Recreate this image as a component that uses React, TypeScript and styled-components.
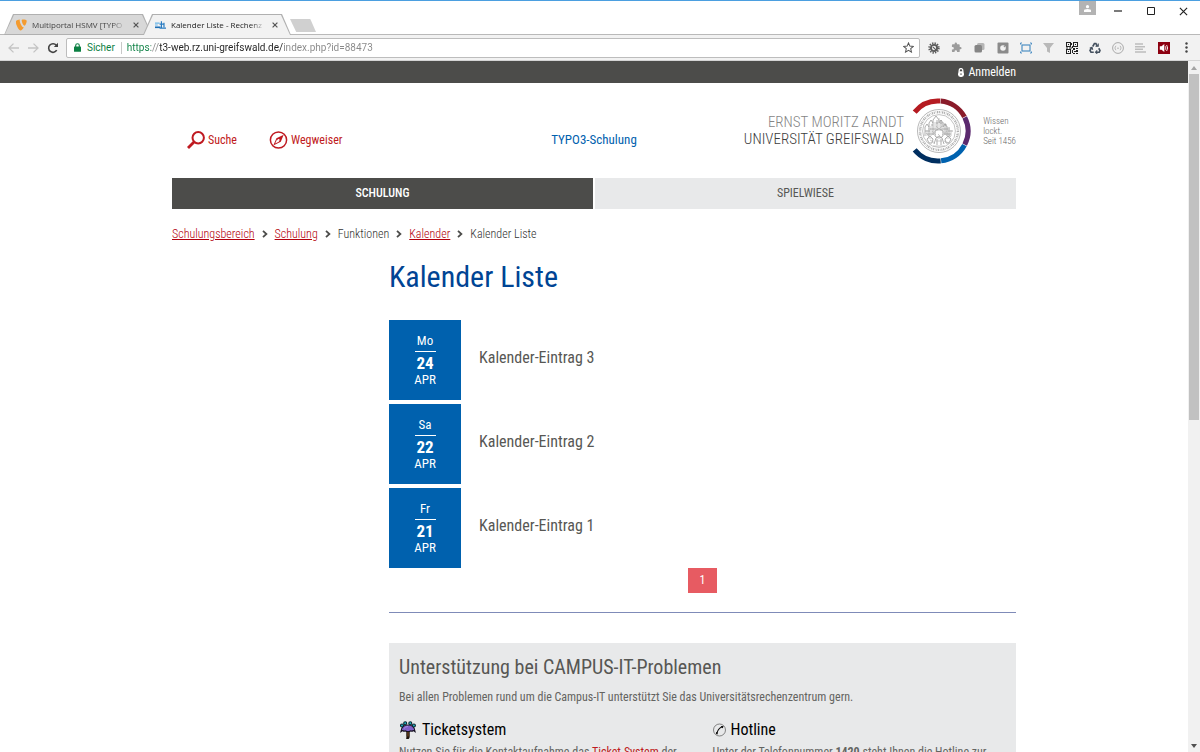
import React from 'react';
import styled, { createGlobalStyle } from 'styled-components';

const condensed = '"Roboto Condensed", Roboto, "Liberation Sans", sans-serif';
const ui = 'Roboto, "Open Sans", "Liberation Sans", sans-serif';

const color = {
  dark: '#4c4c4a',
  text: '#575754',
  muted: '#646461',
  red: '#bf1a21',
  blue: '#0061ae',
  title: '#004494',
  panel: '#e8e9ea',
};

const GlobalStyle = createGlobalStyle`
  *, *::before, *::after { box-sizing: border-box; }
  body { margin: 0; overflow: hidden; background: #fff; }
  h1, h2, h3, p, ul, ol { margin: 0; padding: 0; font-weight: 400; }
  ul, ol { list-style: none; }
  button, input { font: inherit; color: inherit; margin: 0; padding: 0; border: 0; background: none; }
  svg { display: block; flex: none; }
`;

/* ---------- browser window ---------- */

const Window = styled.div`
  display: flex;
  flex-direction: column;
  height: 100vh;
  border-top: 1px solid #4b9fe0;
  font-family: ${ui};
`;

const TitleBar = styled.header`
  display: flex;
  justify-content: space-between;
  align-items: flex-start;
  height: 33px;
  background: #fff;
`;

const TabStrip = styled.div`
  display: flex;
  align-items: flex-end;
  height: 34px;
  padding-left: 4px;
`;

const TAB_SHAPE = 'polygon(9px 0, calc(100% - 9px) 0, 100% 100%, 0 100%)';

const Tab = styled.div<{ $active?: boolean }>`
  position: relative;
  z-index: ${p => (p.$active ? 2 : 1)};
  display: flex;
  align-items: center;
  width: 148px;
  height: 21px;
  padding: 0 10px 0 12px;
  font-family: "Open Sans", ${ui};
  font-size: 8px;
  line-height: 20px;
  color: ${p => (p.$active ? '#222' : '#444')};

  & + & { margin-left: -9px; }

  &::before, &::after {
    content: '';
    position: absolute;
    z-index: -1;
    inset: 0;
    clip-path: ${TAB_SHAPE};
    background: #b0b0b0;
  }
  &::after {
    inset: 1px 1px ${p => (p.$active ? '0' : '1px')};
    background: ${p => (p.$active ? '#f2f2f2' : '#d8d8d8')};
  }
`;

const TabTitle = styled.span`
  flex: 1;
  margin: 0 4px 0 5px;
  overflow: hidden;
  white-space: nowrap;
  mask-image: linear-gradient(to right, #000 85%, transparent);
`;

const TabClose = styled.button`
  display: grid;
  place-items: center;
  width: 12px;
  height: 12px;
  color: #555;
`;

const NewTab = styled.button`
  width: 26px;
  height: 13px;
  margin: 0 0 3px -1px;
  clip-path: polygon(0 0, 78% 0, 100% 100%, 24% 100%);
  background: #d0d0d0;
`;

const WindowButtons = styled.div`
  display: flex;
  align-items: flex-start;
`;

const ProfileButton = styled.button`
  display: grid;
  place-items: center;
  width: 17px;
  height: 14px;
  margin-right: 5px;
  background: #b3b3b3;
  color: #fff;
`;

const WindowButton = styled.button`
  display: grid;
  place-items: center;
  width: 33px;
  height: 20px;
  color: #222;
`;

const Toolbar = styled.div`
  display: flex;
  align-items: center;
  height: 27px;
  padding: 0 2px 0 3px;
  border-top: 1px solid #b9b9b9;
  border-bottom: 1px solid #d4d4d4;
  background: #f2f2f2;
`;

const ToolButton = styled.button<{ $muted?: boolean }>`
  display: grid;
  place-items: center;
  width: 20px;
  height: 20px;
  color: ${p => (p.$muted ? '#c4c4c4' : '#444')};
`;

const AddressBar = styled.div`
  display: flex;
  flex: 1;
  align-items: center;
  height: 20px;
  margin: 0 2px 0 3px;
  padding: 0 5px 0 7px;
  border: 1px solid #bdbdbd;
  border-radius: 2px;
  background: #fff;
  font-size: 10px;
  color: #0b8043;
`;

const Secure = styled.label`
  margin-left: 6px;
  padding-right: 6px;
  border-right: 1px solid #c8c8c8;
  line-height: 12px;
`;

const AddressInput = styled.input`
  flex: 1;
  margin-left: 5px;
  height: 18px;
  outline: 0;
  color: #333;
  background: linear-gradient(to right, #0b8043 24px, #888 24px, #888 32px, #222 32px, #222 156px, #888 156px);
  background-clip: text;
  -webkit-text-fill-color: transparent;
`;

const Star = styled.button`
  display: grid;
  place-items: center;
  color: #555;
`;

const Extensions = styled.div`
  display: grid;
  grid-auto-flow: column;
  grid-auto-columns: 23px;
`;

const ExtensionButton = styled.button`
  display: grid;
  place-items: center;
  height: 20px;
`;

const Viewport = styled.div`
  display: flex;
  flex: 1;
  min-height: 0;
`;

const Page = styled.div`
  flex: 1;
  overflow: hidden;
  background: #fff;
  font-family: ${condensed};
  font-size: 12px;
  line-height: 16px;
  color: ${color.text};
`;

const Scrollbar = styled.div`
  display: flex;
  flex-direction: column;
  width: 12px;
  background: #f1f1f1;
`;

const ScrollArrow = styled.button<{ $down?: boolean }>`
  display: grid;
  place-items: center;
  height: 13px;
  color: ${p => (p.$down ? '#505050' : '#a3a3a3')};
`;

const ScrollTrack = styled.div`
  flex: 1;
  padding: 0 1px;
`;

const ScrollThumb = styled.div`
  height: 52%;
  background: #c1c1c1;
`;

/* ---------- page ---------- */

const Container = styled.div`
  max-width: 844px;
  margin: 0 auto;
`;

const TopBar = styled.div`
  background: ${color.dark};
`;

const TopBarInner = styled(Container)`
  display: flex;
  justify-content: flex-end;
  height: 22px;
`;

const LoginLink = styled.a`
  display: flex;
  align-items: center;
  gap: 4px;
  color: #fff;
  text-decoration: none;
`;

const Masthead = styled(Container)`
  display: grid;
  grid-template-columns: 1fr auto 1fr;
  align-items: center;
  height: 95px;
`;

const QuickLinks = styled.div`
  display: flex;
  gap: 32px;
  padding: 19px 0 0 15px;
`;

const QuickLink = styled.a`
  display: flex;
  align-items: center;
  gap: 3px;
  color: ${color.red};
  text-decoration: none;
`;

const SiteName = styled.a`
  padding-top: 19px;
  font-size: 13px;
  color: ${color.blue};
  text-decoration: none;
`;

const Logo = styled.a`
  display: flex;
  justify-content: flex-end;
  align-items: center;
  color: #3c3c3c;
  text-decoration: none;
`;

const LogoName = styled.span`
  display: grid;
  margin-right: 6px;
  font-size: 15px;
  line-height: 17px;
  font-weight: 300;
  text-align: right;
  white-space: nowrap;
`;

const LogoPerson = styled.span`
  color: #858585;
`;

const Claim = styled.span`
  display: grid;
  margin-left: 11px;
  font-size: 9px;
  line-height: 10px;
  font-weight: 300;
  color: #666;
  white-space: nowrap;
`;

const MainNav = styled.nav`
  display: grid;
  grid-template-columns: 1fr 1fr;
  gap: 2px;
`;

const NavLink = styled.a<{ $active?: boolean }>`
  line-height: 31px;
  text-align: center;
  text-transform: uppercase;
  text-decoration: none;
  font-weight: ${p => (p.$active ? 500 : 400)};
  color: ${p => (p.$active ? '#fff' : color.text)};
  background: ${p => (p.$active ? color.dark : color.panel)};
`;

const Breadcrumbs = styled.ol`
  display: flex;
  padding-top: 17px;
  font-weight: 300;
  color: #333;
`;

const Crumb = styled.li`
  display: flex;
  align-items: center;

  a { color: #b3000c; }
  svg { margin: 0 7px; }
`;

const Content = styled.main`
  margin-left: 217px;
`;

const PageTitle = styled.h1`
  padding: 17px 0 25px;
  font-size: 30px;
  line-height: 36px;
  color: ${color.title};
`;

const EventList = styled.ul`
  display: grid;
  gap: 4px;
`;

const EventItem = styled.li`
  display: flex;
  gap: 18px;
`;

const DateBox = styled.time`
  display: flex;
  flex-direction: column;
  align-items: center;
  width: 72px;
  height: 80px;
  padding-top: 13px;
  background: ${color.blue};
  color: #fff;
  font-size: 13px;
`;

const Weekday = styled.span`
  width: 21px;
  padding-bottom: 2px;
  border-bottom: 1px solid #fff;
  text-align: center;
`;

const Day = styled.strong`
  padding-top: 3px;
  font-size: 17px;
  line-height: 17px;
`;

const Month = styled.span`
  line-height: 15px;
  text-transform: uppercase;
`;

const EventLink = styled.a`
  padding-top: 28px;
  font-size: 16px;
  line-height: 20px;
  color: ${color.text};
  text-decoration: none;
`;

const Pagination = styled.nav`
  display: flex;
  justify-content: center;
  padding-bottom: 19px;
  border-bottom: 1px solid #7f8bb8;
`;

const PageLink = styled.a`
  width: 29px;
  line-height: 25px;
  text-align: center;
  text-decoration: none;
  color: #fff;
  background: #e75b62;
`;

const SupportPanel = styled.section`
  margin-top: 30px;
  padding: 11px 10px 30px;
  background: ${color.panel};
  color: ${color.muted};
`;

const PanelTitle = styled.h2`
  font-size: 20px;
  line-height: 26px;
  color: ${color.text};
`;

const PanelIntro = styled.p`
  padding: 9px 0 14px;
`;

const PanelColumns = styled.div`
  display: grid;
  grid-template-columns: 1fr 1fr;
  gap: 20px;
`;

const ColumnTitle = styled.h3`
  display: flex;
  align-items: center;
  gap: 5px;
  padding-bottom: 3px;
  font-size: 16px;
  line-height: 22px;
  color: #000;
`;

const TextLink = styled.a`
  color: ${color.red};
  text-decoration: none;
`;

/* ---------- drawings ---------- */

const Cross = ({ size }: { size: number }) => (
  <svg width={size} height={size} viewBox="0 0 10 10" stroke="currentColor" strokeWidth={size > 8 ? 1.3 : 2}>
    <path d="M1 1l8 8M9 1l-8 8" />
  </svg>
);

const Typo3Icon = () => (
  <svg width="11" height="12" viewBox="0 0 11 12" fill="#f49b2f">
    <path d="M7.800 8.200c-.2.1-.3.1-.5.1C5.800 8.300 3.700 3.200 3.700 1.500c0-.6.2-.8.4-1C2.300.7.500 1.300 0 2c-.1.200-.2.500-.2.800 0 2.700 2.800 8.700 4.800 8.700.9 0 2.400-1.500 3.200-3.300" />
    <path d="M6.900.4c1.900 0 3.800.3 3.800 1.400 0 2.200-1.400 4.900-2.100 4.900-1.300 0-2.900-3.600-2.900-5.400 0-.8.300-.9 1.200-.9" />
  </svg>
);

const CampusIcon = () => (
  <svg width="11" height="10" viewBox="0 0 12 10" fill="none">
    <path d="M0 3h5M0 5h3" stroke="#6bb5e8" strokeWidth="1.200" />
    <path d="M0 7.500h6" stroke="#1d6fb5" strokeWidth="1.800" />
    <path d="M7 1v8M5 4h5M5 8.500h7M9.800 2.500v5" stroke="#2a7cc2" strokeWidth="1.300" />
  </svg>
);

const PersonIcon = () => (
  <svg width="7" height="7" viewBox="0 0 7 7" fill="currentColor">
    <circle cx="3.500" cy="1.700" r="1.600" />
    <path d="M0 7V5.500Q0 4 3.500 4T7 5.500V7z" />
  </svg>
);

const BackIcon = ({ flip }: { flip?: boolean }) => (
  <svg width="11" height="10" viewBox="0 0 11 10" fill="none" stroke="currentColor" strokeWidth="1.300">
    <path d={flip ? 'M0 5h10M5.500.600L10 5 5.500 9.400' : 'M11 5H1M5.500.600L1 5l4.500 4.400'} />
  </svg>
);

const ReloadIcon = () => (
  <svg width="12" height="12" viewBox="0 0 12 12" fill="none" stroke="currentColor" strokeWidth="1.600">
    <path d="M9.700 8.200A4.300 4.300 0 1 1 9.300 3.300" />
    <path d="M11 .800V5H6.800z" fill="currentColor" stroke="none" />
  </svg>
);

const PadlockIcon = () => (
  <svg width="7" height="9" viewBox="0 0 7 9">
    <path d="M1.700 4V2.600a1.800 1.800 0 0 1 3.600 0V4" fill="none" stroke="currentColor" strokeWidth="1.100" />
    <rect y="3.600" width="7" height="5.200" rx=".6" fill="currentColor" />
  </svg>
);

const StarIcon = () => (
  <svg width="11" height="11" viewBox="0 0 24 24" fill="none" stroke="currentColor" strokeWidth="2.200">
    <path d="M12 2l3 7 7.500.600-5.700 5 1.700 7.400-6.500-4-6.500 4 1.700-7.400-5.700-5L9 9z" />
  </svg>
);

const GearIcon = () => (
  <svg width="12" height="12" viewBox="0 0 12 12" fill="none">
    <circle cx="6" cy="6" r="4.800" stroke="#5a5a5a" strokeWidth="1.800" strokeDasharray="1.350 1.160" />
    <circle cx="6" cy="6" r="3.100" stroke="#5a5a5a" strokeWidth="1.900" />
    <path d="M4.800 4.800l3.400 3.400" stroke="#5a5a5a" strokeWidth="1.100" />
  </svg>
);

const PuzzleIcon = () => (
  <svg width="11" height="11" viewBox="0 0 24 24" fill="#9c9c9c">
    <path d="M20.500 11H19V7a2 2 0 0 0-2-2h-4V3.500a2.500 2.500 0 0 0-5 0V5H4a2 2 0 0 0-2 2v3.800h1.500a2.700 2.700 0 0 1 0 5.400H2V20a2 2 0 0 0 2 2h3.800v-1.500a2.700 2.700 0 0 1 5.400 0V22H17a2 2 0 0 0 2-2v-4h1.500a2.500 2.500 0 0 0 0-5z" />
  </svg>
);

const StackIcon = () => (
  <svg width="11" height="11" viewBox="0 0 11 11">
    <rect x="3" y="1" width="7.500" height="7" rx="1.500" fill="#b5b5b5" />
    <rect x=".5" y="3" width="7.500" height="7.500" rx="1.500" fill="#858585" />
  </svg>
);

const SquareIcon = () => (
  <svg width="12" height="12" viewBox="0 0 12 12">
    <rect x=".5" y=".5" width="11" height="11" rx="1" fill="#8b8b8b" />
    <circle cx="6" cy="6" r="2.800" fill="#f2f2f2" />
    <path d="M6.500 4.500L8.500 3 7.500 5.500z" fill="#8b8b8b" />
  </svg>
);

const CaptureIcon = () => (
  <svg width="12" height="12" viewBox="0 0 12 12" fill="none" stroke="#4d8fc4">
    <rect x="2" y="3" width="8" height="6" strokeWidth="1.200" />
    <path d="M.5 2.500V1H2M10 1h1.500v1.500M.5 9.500V11H2M10 11h1.500V9.500" />
  </svg>
);

const FunnelIcon = () => (
  <svg width="11" height="10" viewBox="0 0 11 10" fill="#b9b9b9">
    <path d="M0 0h11L7 5v5L4 8.500V5z" />
  </svg>
);

const QrIcon = () => (
  <svg width="12" height="12" viewBox="0 0 12 12" fill="#222">
    <path fillRule="evenodd" d="M0 0h5v5H0zM1 1v3h3V1zM7 0h5v5H7zM8 1v3h3V1zM0 7h5v5H0zM1 8v3h3V8z" />
    <path d="M2 2h1v1H2zM9 2h1v1H9zM2 9h1v1H2zM5 1h1v2H5zM6 4h1v2H6zM0 5.500h2v1H0zM3 5.500h3v1H3zM7 6h2v2H7zM10 6h2v1h-2zM6 8h1v3H6zM8 9h2v1H8zM10 8h2v2h-2zM7 11h2v1H7zM10 11h2v1h-2z" />
  </svg>
);

const RecycleIcon = () => (
  <svg width="12" height="12" viewBox="0 0 24 24" fill="none" stroke="#44505e" strokeWidth="3.200">
    <path d="M7.500 9l3.300-6h3l3 5.500M19.500 12.500L22 17l-1.500 3.500H14M9.500 20.500H4L2 17l3-5.500" />
    <path d="M13 8.500h5.500V3M16.500 17L13 20.500l3.500 3M1.500 12.500L6 10.500l1.500 5" strokeWidth="2.200" />
  </svg>
);

const BracesIcon = () => (
  <svg width="12" height="12" viewBox="0 0 12 12" fill="none" stroke="#aaa">
    <circle cx="6" cy="6" r="5.400" />
    <path d="M4.200 4Q3.200 4 3.400 5L2.800 6l.6 1Q3.200 8 4.200 8M7.800 4q1 0 .8 1l.6 1-.6 1q.2 1-.8 1" strokeWidth=".8" />
    <path d="M5 6.200h2" strokeWidth=".8" />
  </svg>
);

const LinesIcon = () => (
  <svg width="11" height="10" viewBox="0 0 11 10" stroke="#bdbdbd" strokeWidth="1.500">
    <path d="M0 1h8M0 3.700h10M0 6.300h8M0 9h11" />
  </svg>
);

const SpeakerIcon = () => (
  <svg width="12" height="12" viewBox="0 0 12 12">
    <rect width="12" height="12" fill="#8c0010" />
    <path d="M1.800 4.300h1.700L6.300 2v8L3.500 7.700H1.800z" fill="#fff" />
    <path d="M7.300 4.300q1.300 1.700 0 3.400M8.600 3q2.200 3 0 6" fill="none" stroke="#fff" strokeWidth=".9" />
  </svg>
);

const DotsIcon = () => (
  <svg width="3" height="11" viewBox="0 0 3 11" fill="#444">
    <circle cx="1.500" cy="1.500" r="1.200" />
    <circle cx="1.500" cy="5.500" r="1.200" />
    <circle cx="1.500" cy="9.500" r="1.200" />
  </svg>
);

const LoginIcon = () => (
  <svg width="6" height="9" viewBox="0 0 6 9">
    <path d="M1.200 4V2.400a1.800 1.800 0 0 1 3.600 0V4" fill="none" stroke="#fff" strokeWidth="1.300" />
    <rect y="3.200" width="6" height="5.800" rx="2.400" fill="#fff" />
    <path d="M3 5.300v1.700" stroke="#4c4c4a" />
  </svg>
);

const SearchIcon = () => (
  <svg width="18" height="18" viewBox="0 0 18 18" fill="none" stroke={color.red}>
    <circle cx="11.200" cy="6.800" r="5.700" strokeWidth="2" />
    <path d="M7 11L1 17" strokeWidth="2.800" />
  </svg>
);

const CompassIcon = () => (
  <svg width="19" height="18" viewBox="0 0 19 18">
    <circle cx="9.500" cy="9" r="8.100" fill="none" stroke={color.red} strokeWidth="1.500" />
    <path fillRule="evenodd" d="M14.700 3.700L11.800 10.800 4.300 14.500 7.400 7.300zM8 8.500l-1.800 4 4-1.900z" fill={color.red} />
    <circle cx="9.600" cy="9" r="1" fill="#fff" />
  </svg>
);

const ChevronIcon = () => (
  <svg width="6" height="8" viewBox="0 0 6 8" fill="none" stroke="#4c4c4a" strokeWidth="1.800">
    <path d="M1 .800L4.400 4 1 7.200" />
  </svg>
);

const segments: [number, number, string][] = [
  [-141, -86, '#b51b21'],
  [-85, -28, '#8a1b2a'],
  [-27, 27, '#5b2a6e'],
  [28, 84, '#0062af'],
  [85, 141, '#002f60'],
];

const polar = (deg: number, r: number) =>
  `${(28 + r * Math.cos((deg * Math.PI) / 180)).toFixed(2)} ${(34 + r * Math.sin((deg * Math.PI) / 180)).toFixed(2)}`;

const SealIcon = () => (
  <svg width="62" height="68" viewBox="0 0 62 68" fill="none">
    {segments.map(([from, to, stroke]) => (
      <path key={stroke} d={`M${polar(from, 30)}A30 30 0 0 1 ${polar(to, 30)}`} stroke={stroke} strokeWidth="5" />
    ))}
    <g transform="translate(29 34)" stroke="#9a9a9a">
      <circle r="21.500" strokeWidth=".7" />
      <circle r="18.900" strokeWidth="2.400" strokeDasharray="1 .9 .5 .8 1.300 .7" stroke="#b0b0b0" />
      <circle r="16.400" strokeWidth=".6" />
      <path
        strokeWidth=".8"
        d="M-14 5V-4l2-3 2 3v-4l2-3 2 3v-3l3-4 3 4v3l2-3 2 3v4l2-3 2 3v9M-10-4V6M-6-8V4M-2-11V0M2-11V0M6-8V4M10-4V6M-14 0h5M9 0h5M-9-2h6M3-2h6M-12 3h7M5 3h7M-4 0q4-4 8 0v5q-4 4-8 0zM-5 13l2-6 3-2 3 2 2 6M-2 8v6M2 8v6M-12 8l3-3 3 3-1 4-3 0zM6 8l3-3 3 3-2 4-3 0zM-8-6h2M-3-8h2M1-8h2M6-6h2"
      />
      <path strokeWidth=".7" stroke="#b5b5b5" d="M-13 2l4 4M-9 9l5 3M-7 0l4 4M3 4l5-4M5 10l5 2M8 2l4 4M-3-5l3 3 3-3M-1 3l2 2M-6 15h12M-11-2h3M8-2h3M-12-1V5M-8-5V5M-4-9V2M0-13V0M4-9V2M8-5V5M12-1V5M-11 7h4M7 7h4M-3 10h6" />
    </g>
  </svg>
);

const UmbrellaIcon = () => (
  <svg width="18" height="18" viewBox="-1 0 18 18">
    <path d="M8 9v6.500q0 1.500-1.700 1.300" fill="none" stroke="#1c120a" strokeWidth="3.400" />
    <path d="M8 9v6.500" fill="none" stroke="#6a4422" strokeWidth="1.400" />
    <path d="M1 10.500Q1.500 4 8 4t7 6.500q-1.500-1.500-3-.3-1.500-.8-2.500.3H6.500Q5.500 9.400 4 10.200 2.500 9 1 10.500z" fill="#8160c9" stroke="#15101f" strokeWidth="1.200" />
    <path d="M4 7.500Q5.500 5.500 8 5.500" fill="none" stroke="#a98ce6" />
    <g fill="#1fb6c4" stroke="#0c2530" strokeWidth="1.100">
      <circle cx="2" cy="4.500" r="1.500" />
      <circle cx="5.200" cy="2.200" r="1.500" />
      <circle cx="10.300" cy="2.200" r="1.500" />
      <circle cx="13.900" cy="4.500" r="1.500" />
    </g>
  </svg>
);

const PhoneIcon = () => (
  <svg width="13" height="14" viewBox="0 0 13 14" fill="none">
    <circle cx="6.500" cy="7" r="6" stroke="#555" strokeWidth=".7" />
    <path d="M4 10.500Q4.500 6 9.300 3.500" stroke="#111" strokeWidth="1.100" />
    <path d="M3 9l1.800.500L4.500 11.500 3 11zM8 3l2.500 0L9.800 5.300 8.500 4.700z" fill="#111" />
  </svg>
);

const Triangle = ({ down }: { down?: boolean }) => (
  <svg width="6" height="4" viewBox="0 0 6 4" fill="currentColor">
    <path d={down ? 'M0 0h6L3 4z' : 'M0 4h6L3 0z'} />
  </svg>
);

/* ---------- data ---------- */

const extensions: [string, () => React.ReactElement][] = [
  ['Entwickler', GearIcon],
  ['Puzzle', PuzzleIcon],
  ['Stapel', StackIcon],
  ['Ansicht', SquareIcon],
  ['Aufnahme', CaptureIcon],
  ['Filter', FunnelIcon],
  ['QR-Code', QrIcon],
  ['Recycling', RecycleIcon],
  ['JSON', BracesIcon],
  ['Liste', LinesIcon],
  ['Ton', SpeakerIcon],
  ['Menü', DotsIcon],
];

const crumbs = [
  { label: 'Schulungsbereich', link: true },
  { label: 'Schulung', link: true },
  { label: 'Funktionen' },
  { label: 'Kalender', link: true },
  { label: 'Kalender Liste' },
];

const events = [
  { weekday: 'Mo', day: 24, title: 'Kalender-Eintrag 3' },
  { weekday: 'Sa', day: 22, title: 'Kalender-Eintrag 2' },
  { weekday: 'Fr', day: 21, title: 'Kalender-Eintrag 1' },
];

/* ---------- composition ---------- */

function BrowserChrome() {
  return (
    <>
      <TitleBar>
        <TabStrip>
          <Tab>
            <Typo3Icon />
            <TabTitle>Multiportal HSMV [TYPO</TabTitle>
            <TabClose aria-label="Tab schließen"><Cross size={6} /></TabClose>
          </Tab>
          <Tab $active>
            <CampusIcon />
            <TabTitle>Kalender Liste - Rechenz</TabTitle>
            <TabClose aria-label="Tab schließen"><Cross size={6} /></TabClose>
          </Tab>
          <NewTab aria-label="Neuer Tab" />
        </TabStrip>
        <WindowButtons>
          <ProfileButton aria-label="Profil"><PersonIcon /></ProfileButton>
          <WindowButton aria-label="Minimieren">
            <svg width="8" height="2" viewBox="0 0 8 2"><path d="M0 1h8" stroke="currentColor" strokeWidth="1.200" /></svg>
          </WindowButton>
          <WindowButton aria-label="Maximieren">
            <svg width="8" height="8" viewBox="0 0 8 8"><path d="M.5.500h7v7h-7z" fill="none" stroke="currentColor" /></svg>
          </WindowButton>
          <WindowButton aria-label="Schließen"><Cross size={9} /></WindowButton>
        </WindowButtons>
      </TitleBar>
      <Toolbar>
        <ToolButton $muted aria-label="Zurück"><BackIcon /></ToolButton>
        <ToolButton $muted aria-label="Vorwärts"><BackIcon flip /></ToolButton>
        <ToolButton aria-label="Neu laden"><ReloadIcon /></ToolButton>
        <AddressBar>
          <PadlockIcon />
          <Secure htmlFor="address">Sicher</Secure>
          <AddressInput id="address" defaultValue="https://t3-web.rz.uni-greifswald.de/index.php?id=88473" />
          <Star aria-label="Lesezeichen"><StarIcon /></Star>
        </AddressBar>
        <Extensions>
          {extensions.map(([label, Icon]) => (
            <ExtensionButton key={label} aria-label={label}><Icon /></ExtensionButton>
          ))}
        </Extensions>
      </Toolbar>
    </>
  );
}

export default function App() {
  return (
    <Window>
      <GlobalStyle />
      <BrowserChrome />
      <Viewport>
        <Page>
          <TopBar>
            <TopBarInner>
              <LoginLink href="#login"><LoginIcon />Anmelden</LoginLink>
            </TopBarInner>
          </TopBar>
          <Masthead>
            <QuickLinks>
              <QuickLink href="#suche"><SearchIcon />Suche</QuickLink>
              <QuickLink href="#wegweiser"><CompassIcon />Wegweiser</QuickLink>
            </QuickLinks>
            <SiteName href="#start">TYPO3-Schulung</SiteName>
            <Logo href="#universitaet">
              <LogoName>
                <LogoPerson>ERNST MORITZ ARNDT</LogoPerson>
                <span>UNIVERSITÄT GREIFSWALD</span>
              </LogoName>
              <SealIcon />
              <Claim>
                <span>Wissen</span>
                <span>lockt.</span>
                <span>Seit 1456</span>
              </Claim>
            </Logo>
          </Masthead>
          <Container>
            <MainNav>
              <NavLink $active href="#schulung">Schulung</NavLink>
              <NavLink href="#spielwiese">Spielwiese</NavLink>
            </MainNav>
            <Breadcrumbs>
              {crumbs.map((crumb, i) => (
                <Crumb key={crumb.label}>
                  {i > 0 && <ChevronIcon />}
                  {crumb.link ? <a href={`#${crumb.label}`}>{crumb.label}</a> : <span>{crumb.label}</span>}
                </Crumb>
              ))}
            </Breadcrumbs>
            <Content>
              <PageTitle>Kalender Liste</PageTitle>
              <EventList>
                {events.map(event => (
                  <EventItem key={event.day}>
                    <DateBox dateTime={`2017-04-${event.day}`}>
                      <Weekday>{event.weekday}</Weekday>
                      <Day>{event.day}</Day>
                      <Month>Apr</Month>
                    </DateBox>
                    <EventLink href={`#eintrag-${event.day}`}>{event.title}</EventLink>
                  </EventItem>
                ))}
              </EventList>
              <Pagination>
                <PageLink href="#seite-1">1</PageLink>
              </Pagination>
              <SupportPanel>
                <PanelTitle>Unterstützung bei CAMPUS-IT-Problemen</PanelTitle>
                <PanelIntro>Bei allen Problemen rund um die Campus-IT unterstützt Sie das Universitätsrechenzentrum gern.</PanelIntro>
                <PanelColumns>
                  <div>
                    <ColumnTitle><UmbrellaIcon />Ticketsystem</ColumnTitle>
                    <p>Nutzen Sie für die Kontaktaufnahme das <TextLink href="#ticket">Ticket-System</TextLink> der</p>
                  </div>
                  <div>
                    <ColumnTitle><PhoneIcon />Hotline</ColumnTitle>
                    <p>Unter der Telefonnummer <strong>1420</strong> steht Ihnen die Hotline zur</p>
                  </div>
                </PanelColumns>
              </SupportPanel>
            </Content>
          </Container>
        </Page>
        <Scrollbar>
          <ScrollArrow aria-label="Nach oben"><Triangle /></ScrollArrow>
          <ScrollTrack><ScrollThumb /></ScrollTrack>
          <ScrollArrow $down aria-label="Nach unten"><Triangle down /></ScrollArrow>
        </Scrollbar>
      </Viewport>
    </Window>
  );
}
